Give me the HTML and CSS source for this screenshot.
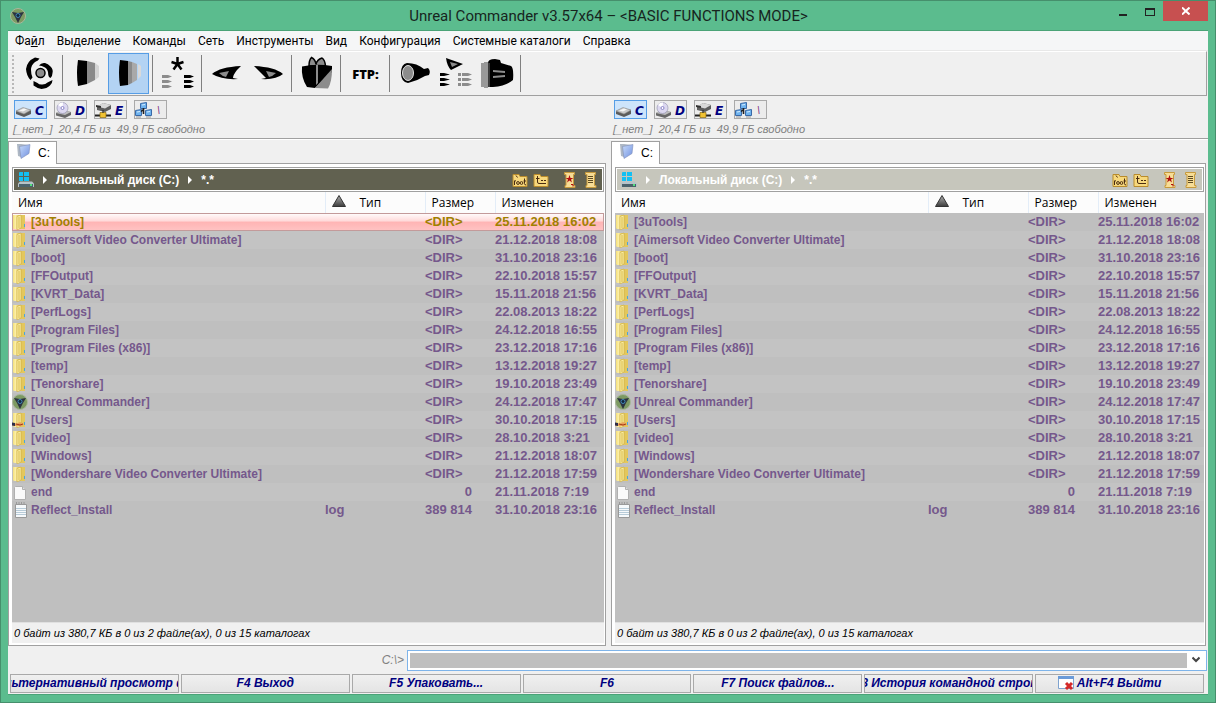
FILE: index.html
```html
<!DOCTYPE html>
<html lang="ru">
<head>
    <meta charset="UTF-8">
    <meta name="viewport" content="width=device-width, initial-scale=1.0">
    <title>Unreal Commander v3.57x64</title>
    <link rel="stylesheet" href="styles.css">
    <script src="script.js" defer></script>
</head>
<body>
    <!-- shared icons -->
    <svg class="sprite" width="0" height="0">
        <defs>
            <linearGradient id="gold" x1="0" x2="1"><stop offset="0" stop-color="#f3de78"/><stop offset=".4" stop-color="#fdf0a6"/><stop offset="1" stop-color="#dfc257"/></linearGradient>
            <linearGradient id="blue" x1="0" x2="1" y2="1"><stop offset="0" stop-color="#c8dcfa"/><stop offset="1" stop-color="#6f8fe0"/></linearGradient>
            <linearGradient id="steel" x2="0" y2="1"><stop offset="0" stop-color="#b0b0b0"/><stop offset="1" stop-color="#3c3c3c"/></linearGradient>
        </defs>
        <symbol id="i-app" viewBox="0 0 16 16">
            <circle cx="8" cy="8" r="7.500" fill="#7d9a62" stroke="#a9b79c"/>
            <path d="M2 4l6 1 6-1-3 5-3 6-3-6z" fill="#2c3340"/>
            <circle cx="8" cy="7.500" r="2" fill="#12263c" stroke="#3f86b5"/>
        </symbol>
        <symbol id="i-folder" viewBox="0 0 16 16">
            <path d="M6 1h7v14H6z" fill="#e3c75c"/>
            <path d="M1 1h6v14H2l-1-1z" fill="url(#gold)"/>
            <path d="M5 2.500l4-1.500v13l-4 2z" fill="#fbeea0" stroke="#c9a93c" stroke-width=".6"/>
            <path d="M7 3v11" stroke="#d8b94a"/>
            <path d="M12 10h1v3h-1z" fill="#4ba6d8"/>
        </symbol>
        <symbol id="i-users" viewBox="0 0 16 16">
            <use href="#i-folder"/>
            <path d="M0 11l5 .5 3-1.500 4 2-2 2-5 0-5-.5z" fill="#e9a15c"/>
            <path d="M0 10.500l3 .5v3l-3-.5z" fill="#2d2d48"/>
            <path d="M4 12l4 1 3-1" stroke="#a53a14" fill="none"/>
        </symbol>
        <symbol id="i-file" viewBox="0 0 16 16">
            <path d="M3.500 2.500h7l3 3v10h-11v-12z" fill="#fafafa" stroke="#b0b0b0"/>
            <path d="M10.500 2.500v3h3" fill="#ddd" stroke="#b0b0b0"/>
        </symbol>
        <symbol id="i-log" viewBox="0 0 16 16">
            <path d="M3.500 2.500h11v13h-11z" fill="#f6f9fb" stroke="#999"/>
            <path d="M4 6.500h10M4 8.500h10M4 10.500h10M4 12.500h10" stroke="#b7cbd8"/>
            <path d="M4.500 0v3M7 0v3M9.500 0v3M12 0v3" stroke="#9a9a9a"/>
        </symbol>
        <symbol id="i-tab" viewBox="0 0 16 16">
            <path d="M1 1l4 0 8 1-8 12-3-1z" fill="#aeb8c4"/>
            <path d="M3.500 3.500L14 1.500l-1 9-8 5z" fill="url(#blue)" stroke="#7f8fb8" stroke-width=".6"/>
        </symbol>
        <symbol id="i-hdd" viewBox="0 0 17 16">
            <path d="M1 9l7-3 8 2v4l-7 3-8-3z" fill="#5c5c5c"/>
            <path d="M1 9l7-3.500 8 2.500-7 4z" fill="#c9c9c9" stroke="#8d8d8d" stroke-width=".6"/>
            <path d="M4 8.500l5-2 3 1-4 2z" fill="#f6f6f6"/>
        </symbol>
        <symbol id="i-cd" viewBox="0 0 17 16">
            <path d="M1 11l5-3 10 2v3l-6 3-9-2.500z" fill="#686868"/>
            <path d="M1 11l5-3 10 2-6 3z" fill="#bdbdbd"/>
            <circle cx="7.500" cy="6" r="5.500" fill="#dcd8f0" stroke="#9a98b5" stroke-width=".7"/>
            <path d="M7.500 6L3 3a5.500 5.500 0 0 1 5-2.400z" fill="#fff"/>
            <circle cx="7.500" cy="6" r="1.500" fill="#fff" stroke="#8a84c8"/>
        </symbol>
        <symbol id="i-net" viewBox="0 0 17 16">
            <path d="M2 5l6-4 8 2v4l-6 3-8-2z" fill="#5e5e5e"/>
            <path d="M2 4.500L8 1l8 2-6 3.500z" fill="#d8d8d8"/>
            <path d="M1 3l5 1v2L1 5z" fill="#333"/>
            <path d="M0 13.500h16" stroke="#222" stroke-width="2"/>
            <path d="M5 10.500h6v5H5z" fill="#f1c232" stroke="#8a6a10" stroke-width=".7"/>
            <path d="M8 8v3" stroke="#222"/>
        </symbol>
        <symbol id="i-lan" viewBox="0 0 17 16">
            <path d="M5.500 1.500l6-1v6l-6 0zM.5 8.500l6-1v6l-6 0zM10.500 8.500l6-1v6l-6 0z" fill="#6fb3ee" stroke="#3a6aa8"/>
            <path d="M7 3l3-.5M2 10l3-.5M12 10l3-.5" stroke="#d5ecff"/>
            <path d="M8.500 6v6M6 9.500l2.500-2" stroke="#222" stroke-width="1.600"/>
            <path d="M1 15h5M11 15h5" stroke="#999"/>
        </symbol>
        <symbol id="i-disk" viewBox="0 0 16 16">
            <path d="M2 0h3v4H1V.5zM6 0h5v4H6zM1 5h4v4H1zM6 5h5v4H6z" fill="#12c0f4"/>
            <path d="M0 11.500l2-2h12l2 2v3.500H0z" fill="#b6c2c8"/>
            <path d="M1 12h14v3H1z" fill="#4c626b"/>
            <path d="M12 12h2v2h-2z" fill="#4fe07c"/>
        </symbol>
        <symbol id="i-root" viewBox="0 0 16 14">
            <path d="M1 1.500h6l1 2h7v10H1z" fill="#f7d87c" stroke="#b98c2c"/>
            <path d="M4 2.500l1.500 2M2.500 12V7.500M2.500 8.500l1.500-1M12.500 5.500v5q0 1.500 1.500 1.500M11.500 8h2.500" stroke="#4a2c10" fill="none"/>
            <circle cx="6" cy="10" r="1.400" fill="none" stroke="#4a2c10"/>
            <circle cx="9.500" cy="10" r="1.400" fill="none" stroke="#4a2c10"/>
        </symbol>
        <symbol id="i-up" viewBox="0 0 16 14">
            <path d="M1 1.500h6l1 2h7v10H1z" fill="#f7d87c" stroke="#b98c2c"/>
            <path d="M4.500 3v6q0 1.500 1.500 1.500h7M3 5.500h3.500M8 7.500h2M11 7.500h2" stroke="#4a2c10" fill="none"/>
        </symbol>
        <symbol id="i-fav" viewBox="0 0 12 16">
            <path d="M.5.500h10v2h-1v11h1.500v2H1v-2h1v-11H.5z" fill="#f7dd96" stroke="#c79a3c"/>
            <path d="M5.500 3l1 3h3L7 7.500l1 3-2.500-2-2.500 2 1-3L1.500 6h3z" fill="#b00f0f"/>
            <path d="M7 12.500h2v2" stroke="#b00f0f" fill="none"/>
        </symbol>
        <symbol id="i-hist" viewBox="0 0 12 16">
            <path d="M.5.500h10v2h-1v11h1.500v2H1v-2h1v-11H.5z" fill="#f7dd96" stroke="#c79a3c"/>
            <path d="M3 4.500h5M3 6.500h5M3 8.500h5M3 10.500h5" stroke="#5d4a20"/>
        </symbol>
    </svg>

    <div class="window">
        <header class="titlebar">
            <svg class="app-icon"><use href="#i-app"/></svg>
            <h1>Unreal Commander v3.57x64 – &lt;BASIC FUNCTIONS MODE&gt;</h1>
            <div class="win-buttons">
                <button type="button" class="win-btn" aria-label="Свернуть"><svg width="10" height="10"><path d="M1 7h8v2H1z"/></svg></button>
                <button type="button" class="win-btn" aria-label="Развернуть"><svg width="10" height="10"><path d="M0 1h10v8H0zM1 3v5h8V3z" fill-rule="evenodd"/></svg></button>
                <button type="button" class="win-btn close" aria-label="Закрыть"><svg width="8" height="8"><path d="M0 .5l7.500 7M7.500.500L0 7.500" stroke="#fff" stroke-width="2"/></svg></button>
            </div>
        </header>

        <div class="client">
            <nav class="menu">
                <a href="#">Фа<u>й</u>л</a>
                <a href="#">Выделение</a>
                <a href="#">Команды</a>
                <a href="#">Сеть</a>
                <a href="#">Инструменты</a>
                <a href="#">Вид</a>
                <a href="#">Конфигурация</a>
                <a href="#">Системные каталоги</a>
                <a href="#">Справка</a>
            </nav>

            <div class="toolbar">
                <span class="grip"></span>
                <button type="button" aria-label="Обновить"><svg viewBox="0 0 41 41">
                    <circle cx="22.500" cy="20" r="4.500" fill="#8c8c8c" stroke="#000" stroke-width="1.500"/>
                    <path d="M17 4.500l4.500 1q-1 2-4.500 3.500-4 3-4 8 0 4 1.500 7.500l-2 2.500q-4-4-4.500-11 1-8 9-11.500z"/>
                    <path d="M21 12.500q2-3 6-2.500 3 .5 5.500 3.500 3 3 2 6.500 0 3-2 5l-1.500-1q-1-2-1-5-1-4-4-5-2-1.500-5-1.500z"/>
                    <path d="M15.500 28l4 2q2 2 5 1.500 3 0 5-2l5-2.500q0 3-2.500 5.500-3 3-8.500 3.500-4-.5-8-3.500z"/>
                </svg></button>
                <span class="sep"></span>
                <button type="button" aria-label="Краткий вид"><svg viewBox="0 0 41 41">
                    <path d="M11 7q-2 13 0 26l9-2V8z"/>
                    <path d="M20 8v23l8-4V10z" fill="#8a8a8a"/>
                    <path d="M28 10v17l4-3V13z" fill="#d4d4d4"/>
                </svg></button>
                <button type="button" class="active" aria-label="Подробный вид"><svg viewBox="0 0 41 41">
                    <path d="M12 7q-2 13 0 26l8-1V8z"/>
                    <path d="M20 8v24l4-2V9z" fill="#8a8a8a"/>
                    <path d="M24 9v21l5-3V11z" fill="#a9a9a9"/>
                    <path d="M30 11v15l3-3V13z" fill="#d9d9d9"/>
                </svg></button>
                <span class="sep"></span>
                <button type="button" aria-label="Все файлы"><svg viewBox="0 0 41 41">
                    <path d="M20.500 4v7M14.500 9l6 2M26.500 9l-6 2M16.500 16.500l4-5.500M24.500 16.500l-4-5.500" stroke="#000" stroke-width="2.500" fill="none"/>
                    <path d="M5 22h6l4 1.500-4 1.500H5zM5 27h6l4 1.500-4 1.500H5zM5 32h6l4 1.500-4 1.500H5z" fill="#8c8c8c"/>
                    <path d="M27 22h6l4 1.500-4 1.500h-6zM27 32h6l4 1.500-4 1.500h-6z"/>
                    <path d="M27 27h6l4 1.500-4 1.500h-6z"/>
                </svg></button>
                <span class="sep"></span>
                <button type="button" aria-label="Назад"><svg viewBox="0 0 41 41">
                    <path d="M6 21q8-7 29-8l-4 4q-4 5-4 8l5 1q-16 1-26-5z"/>
                    <path d="M13 20l10-2-3 6q-4-1-7-4z" fill="#8c8c8c"/>
                </svg></button>
                <button type="button" aria-label="Вперёд"><svg viewBox="0 0 41 41">
                    <path d="M36 21Q28 14 7 13l4 4 8 8-5 1q15 1 22-5z"/>
                    <path d="M19 18l10 2q-3 3-7 4z" fill="#8c8c8c"/>
                </svg></button>
                <span class="sep"></span>
                <button type="button" aria-label="Архив"><svg viewBox="0 0 41 41">
                    <path d="M13 13q0-6 2.500-8.500 4 2 4.500 7 1-5 6-6.500 3 2 3.500 8z" fill="#8c8c8c" stroke="#000" stroke-width="1.500"/>
                    <path d="M6 13.500q14-3 30-.5v6L19 35l-8-1Q5 25 6 13.500z"/>
                    <path d="M36 16q0 13-4 19.500l-13-.5z" fill="#8c8c8c"/>
                    <path d="M20 12h2l0 18-2 2z" fill="#8c8c8c"/>
                </svg></button>
                <span class="sep"></span>
                <button type="button" class="ftp">FTP:</button>
                <span class="sep"></span>
                <button type="button" aria-label="Поиск"><svg viewBox="0 0 41 41">
                    <path d="M13 10q10 0 17 6l4-1q3 3 1 7l-4 1q-8 5-17 7-7-1-7-10t6-10z"/>
                    <ellipse cx="14" cy="20" rx="5.500" ry="7.500" fill="#8c8c8c" stroke="#e0e0e0"/>
                </svg></button>
                <button type="button" aria-label="Сравнить"><svg viewBox="0 0 41 41">
                    <path d="M11 5l17 6-12 6q-4-4-5-12z"/>
                    <path d="M15 9l8 2-6 3z" fill="#8c8c8c"/>
                    <path d="M5 20h4l6 1.500-6 1.500H5zM5 25h4l6 1.500-6 1.500H5zM5 30h4l6 1.500-6 1.500H5z"/>
                    <path d="M23 20h3v3h-3zM27 20h6l4 1.500-4 1.500h-6zM23 25h3v3h-3zM27 25h6l4 1.500-4 1.500h-6zM23 30h3v3h-3zM27 30h6l4 1.500-4 1.500h-6z" fill="#8c8c8c"/>
                </svg></button>
                <button type="button" aria-label="Каталоги"><svg viewBox="0 0 41 41">
                    <path d="M5 10h3v24H5zM8 9h4v26H8z" fill="#999"/>
                    <path d="M12 10q0-4 7-4l5 1 1 3 10 3q3 2 2 14-7 6-20 7h-5z"/>
                    <path d="M13 10v24" stroke="#777"/>
                    <path d="M17 17l12 1v2l-12-1zM17 25l12-1v-2l-12 1z" fill="#8c8c8c"/>
                </svg></button>
                <span class="sep"></span>
            </div>

            <div class="drives">
                <section class="drive-bar">
                    <div class="drive-list">
                        <button type="button" class="active"><svg><use href="#i-hdd"/></svg><b>C</b></button>
                        <button type="button"><svg><use href="#i-cd"/></svg><b>D</b></button>
                        <button type="button"><svg><use href="#i-net"/></svg><b>E</b></button>
                        <button type="button"><svg><use href="#i-lan"/></svg><i>\</i></button>
                    </div>
                    <p>[_нет_]&nbsp; 20,4 ГБ из&nbsp; 49,9 ГБ свободно</p>
                </section>
                <section class="drive-bar">
                    <div class="drive-list">
                        <button type="button" class="active"><svg><use href="#i-hdd"/></svg><b>C</b></button>
                        <button type="button"><svg><use href="#i-cd"/></svg><b>D</b></button>
                        <button type="button"><svg><use href="#i-net"/></svg><b>E</b></button>
                        <button type="button"><svg><use href="#i-lan"/></svg><i>\</i></button>
                    </div>
                    <p>[_нет_]&nbsp; 20,4 ГБ из&nbsp; 49,9 ГБ свободно</p>
                </section>
            </div>

            <main class="panels">
                <section class="panel">
                    <button type="button" class="tab"><svg><use href="#i-tab"/></svg>C:</button>
                    <div class="panel-body">
                        <div class="path current">
                            <div class="path-inner">
                                <svg class="disk"><use href="#i-disk"/></svg>
                                <span class="arrow"></span><span>Локальный диск (C:)</span>
                                <span class="arrow"></span><span>*.*</span>
                                <div class="path-tools">
                                    <button type="button" aria-label="Корень"><svg width="16" height="14"><use href="#i-root"/></svg></button>
                                    <button type="button" aria-label="Вверх"><svg width="16" height="14"><use href="#i-up"/></svg></button>
                                    <button type="button" class="fav" aria-label="Избранное"><svg width="12" height="16"><use href="#i-fav"/></svg></button>
                                    <button type="button" class="hist" aria-label="История"><svg width="12" height="16"><use href="#i-hist"/></svg></button>
                                </div>
                            </div>
                        </div>
                        <div class="list">
                            <table class="files" data-selected="0">
                                <thead>
                                    <tr><th class="c-name">Имя</th><th class="c-type"><svg width="14" height="12"><path d="M7 .5L13.500 11.500H.5z" fill="url(#steel)" stroke="#333"/></svg>Тип</th><th class="c-size">Размер</th><th>Изменен</th></tr>
                                </thead>
                                <tbody></tbody>
                            </table>
                        </div>
                        <p class="status">0 байт из 380,7 КБ в 0 из 2 файле(ах), 0 из 15 каталогах</p>
                    </div>
                </section>

                <section class="panel">
                    <button type="button" class="tab"><svg><use href="#i-tab"/></svg>C:</button>
                    <div class="panel-body">
                        <div class="path">
                            <div class="path-inner">
                                <svg class="disk"><use href="#i-disk"/></svg>
                                <span class="arrow"></span><span>Локальный диск (C:)</span>
                                <span class="arrow"></span><span>*.*</span>
                                <div class="path-tools">
                                    <button type="button" aria-label="Корень"><svg width="16" height="14"><use href="#i-root"/></svg></button>
                                    <button type="button" aria-label="Вверх"><svg width="16" height="14"><use href="#i-up"/></svg></button>
                                    <button type="button" class="fav" aria-label="Избранное"><svg width="12" height="16"><use href="#i-fav"/></svg></button>
                                    <button type="button" class="hist" aria-label="История"><svg width="12" height="16"><use href="#i-hist"/></svg></button>
                                </div>
                            </div>
                        </div>
                        <div class="list">
                            <table class="files">
                                <thead>
                                    <tr><th class="c-name">Имя</th><th class="c-type"><svg width="14" height="12"><path d="M7 .5L13.500 11.500H.5z" fill="url(#steel)" stroke="#333"/></svg>Тип</th><th class="c-size">Размер</th><th>Изменен</th></tr>
                                </thead>
                                <tbody></tbody>
                            </table>
                        </div>
                        <p class="status">0 байт из 380,7 КБ в 0 из 2 файле(ах), 0 из 15 каталогах</p>
                    </div>
                </section>
            </main>

            <div class="command">
                <label for="cmd">C:\&gt;</label>
                <div class="combo">
                    <input type="text" id="cmd">
                    <button type="button" aria-label="История команд"><svg width="8" height="8"><path d="M.5 1.500L4 5l3.500-3.500" fill="none" stroke="#444" stroke-width="2"/></svg></button>
                </div>
            </div>

            <div class="fkeys">
                <button type="button"><span>Альтернативный просмотр фа</span></button>
                <button type="button"><span>F4 Выход</span></button>
                <button type="button"><span>F5 Упаковать...</span></button>
                <button type="button"><span>F6</span></button>
                <button type="button"><span>F7 Поиск файлов...</span></button>
                <button type="button"><span>F8 История командной строки</span></button>
                <button type="button" class="exit"><svg width="16" height="15" viewBox="0 0 16 15"><path d="M.5.500h15v12H.5z" fill="#fff" stroke="#7fa3cf"/><path d="M0 0h16v3H0z" fill="#6a9bd8"/><path d="M8 7l6 6M14 7l-6 6" stroke="#d42a2a" stroke-width="3"/></svg><span>Alt+F4 Выйти</span></button>
            </div>
        </div>
    </div>
</body>
</html>
```

FILE: styles.css
```css
* {
    box-sizing: border-box;
}
body {
    margin: 0;
    font-family: "Liberation Sans", Arial, sans-serif;
    font-size: 13px;
    color: #000;
}
h1, p {
    margin: 0;
    font-weight: normal;
}
button {
    font: inherit;
    padding: 0;
    border: 0;
    background: none;
}
svg {
    display: block;
    flex: none;
}
.sprite {
    position: absolute;
}

/* window frame */
.window {
    display: flex;
    flex-direction: column;
    min-height: 100vh;
    padding: 0 7px 7px;
    border: 1px solid #468f6c;
    background: #5bbc8e;
}
.titlebar {
    display: flex;
    align-items: center;
    height: 29px;
}
.titlebar h1 {
    flex: 1;
    text-align: center;
    font: 15px Roboto, "Noto Sans", sans-serif;
    color: #17251e;
}
.app-icon {
    width: 16px;
    height: 16px;
    margin: 0 82px 0 2px;
}
.win-buttons {
    display: flex;
    align-self: flex-start;
}
.win-btn {
    display: flex;
    justify-content: center;
    width: 27px;
    height: 20px;
    padding-top: 6px;
    fill: #222;
}
.close {
    width: 45px;
    background: #c75050;
}
.client {
    flex: 1;
    display: flex;
    flex-direction: column;
    border-top: 1px solid #4aa377;
    border-bottom: 1px solid #4aa377;
    background: #f0f0f0;
}

/* menu */
.menu {
    display: flex;
    gap: 12px;
    height: 20px;
    padding-left: 7px;
    background: #f5f6f7;
    border-bottom: 1px solid #e8e8e8;
    font: 12px/20px Roboto, "Noto Sans", sans-serif;
}
.menu a {
    color: #000;
    text-decoration: none;
}

/* toolbar */
.toolbar {
    display: flex;
    align-items: center;
    height: 45px;
    margin-right: 1px;
    padding-left: 4px;
    border-top: 1px solid #fff;
    border-right: 1px solid #a0a0a0;
    border-bottom: 1px solid #a0a0a0;
}
.toolbar button {
    width: 41px;
    height: 41px;
}
.toolbar .active {
    background: #b3d3f3;
    box-shadow: inset 0 0 0 1px #569de5;
}
.grip {
    height: 38px;
    margin-right: 4px;
    border-left: 2px dotted #b8b8b8;
}
.sep {
    width: 1px;
    height: 37px;
    margin: 0 4px 0 3px;
    background: #808080;
}
.toolbar .ftp {
    font: 800 13px "Open Sans", "Noto Sans", sans-serif;
}

/* drives */
.drives {
    display: grid;
    grid-template-columns: 1fr 1fr;
    height: 43px;
    border-bottom: 1px solid #a0a0a0;
}
.drive-bar {
    padding: 4px 5px 0;
}
.drive-list {
    display: flex;
    gap: 7px;
    padding-left: 1px;
}
.drive-list button {
    display: flex;
    align-items: center;
    gap: 3px;
    width: 33px;
    height: 19px;
    border: 1px solid #a9a9a9;
    background: #ececec;
    color: #000080;
}
.drive-list .active {
    border-color: #569de5;
    background: #cde4fb;
}
.drive-list svg {
    width: 17px;
    height: 16px;
}
.drive-list b {
    padding-top: 4px;
    font: italic bold 12px/15px "DejaVu Sans", sans-serif;
}
.drive-list i {
    padding-left: 2px;
    color: #803080;
    font-size: 11px;
}
.drive-bar p {
    font-size: 11px;
    line-height: 20px;
    font-style: italic;
    color: #808080;
}

/* panels */
.panels {
    flex: 1;
    display: grid;
    grid-template-columns: 598fr 595fr;
    gap: 5px;
    padding: 1px 2px 0 0;
    border-top: 1px solid #fff;
}
.panel {
    display: flex;
    flex-direction: column;
}
.tab {
    display: flex;
    align-items: center;
    align-self: flex-start;
    gap: 6px;
    width: 49px;
    height: 23px;
    margin-bottom: -1px;
    padding-left: 7px;
    position: relative;
    border: 1px solid #a0a0a0;
    border-bottom: 0;
    background: #fff;
    font-size: 12px;
}
.tab svg {
    width: 16px;
    height: 16px;
    margin-bottom: 4px;
}
.panel-body {
    flex: 1;
    display: flex;
    flex-direction: column;
    padding: 3px 1px 2px 3px;
    border: 1px solid #a0a0a0;
    background: #fff;
}
.path {
    height: 25px;
    padding: 1px;
    border: 1px solid #a0a0a0;
}
.path-inner {
    display: flex;
    align-items: center;
    height: 100%;
    padding-left: 4px;
    background: #c6c6bc;
    color: #fff;
    font-weight: bold;
    font-size: 12px;
}
.current .path-inner {
    background: #616150;
}
.disk {
    width: 16px;
    height: 16px;
}
.arrow {
    margin: 0 9px;
    border: 4px solid transparent;
    border-left-color: #fff;
    border-right: 0;
}
.path-tools {
    display: flex;
    align-items: center;
    gap: 5px;
    margin-left: auto;
    padding-right: 5px;
}
.path-tools .fav {
    margin-left: 10px;
}
.path-tools .hist {
    margin-left: 4px;
}

/* file list */
.list {
    flex: 1;
    background: #bfbfbf;
}
.files {
    width: 100%;
    table-layout: fixed;
    border-collapse: collapse;
}
.files th {
    height: 21px;
    padding: 0 0 0 6px;
    border-right: 1px solid #e3edf8;
    background: #fcfcfc;
    font: 12px/21px "Open Sans", "Noto Sans", sans-serif;
    text-align: left;
}
.files th:last-child {
    border-right: 0;
}
.c-name {
    width: 313px;
}
.c-type {
    width: 100px;
}
.c-type svg {
    display: inline-block;
    margin-right: 14px;
}
.c-size {
    width: 70px;
}
.files td {
    height: 18px;
    padding: 0;
    color: #75588c;
    font-size: 13px;
    font-weight: bold;
    line-height: 18px;
    white-space: nowrap;
}
.files tbody tr:nth-child(even) {
    background: #c3c3c3;
}
.files .name {
    display: flex;
    align-items: center;
    gap: 3px;
    font-size: 12px;
}
.files .name svg {
    width: 16px;
    height: 16px;
}
.files .num {
    padding-right: 23px;
    text-align: right;
}
.files .selected {
    background: linear-gradient(#fff, #ffd9d9 45%, #ffb4b4 50%, #ffc4c4);
    box-shadow: inset 0 0 0 1px #c39a9a;
}
.files .selected td {
    color: #a08000;
}
.status {
    height: 21px;
    padding-left: 2px;
    border-top: 1px solid #e0e0e0;
    background: #f0f0f0;
    font-size: 11px;
    line-height: 20px;
    font-style: italic;
}

/* command line */
.command {
    display: flex;
    align-items: center;
    height: 27px;
    padding: 3px 1px 2px 0;
}
.command label {
    width: 399px;
    padding-right: 3px;
    text-align: right;
    font-size: 12px;
    font-style: italic;
    color: #808080;
}
.combo {
    flex: 1;
    display: flex;
    height: 21px;
    padding: 2px;
    border: 1px solid #7eb4ea;
    background: #fff;
}
.combo input {
    flex: 1;
    border: 0;
    background: #bfbfbf;
}
.combo button {
    display: flex;
    align-items: center;
    justify-content: center;
    width: 17px;
}

/* function keys */
.fkeys {
    display: grid;
    grid-template-columns: repeat(7, 1fr);
    gap: 2px;
    padding: 1px 4px 1px 2px;
}
.fkeys button {
    display: flex;
    align-items: center;
    justify-content: center;
    gap: 3px;
    min-width: 0;
    height: 19px;
    overflow: hidden;
    border: 1px solid #a9a9a9;
    background: linear-gradient(#f0f0f0, #e4e4e4);
    color: #000080;
    font-size: 12px;
    font-weight: bold;
    font-style: italic;
    line-height: 19px;
    white-space: nowrap;
}
.fkeys .exit {
    padding-right: 20px;
}
```

FILE: script.js
```js
const files = [
    ["folder", "[3uTools]", "", "<DIR>", "25.11.2018 16:02"],
    ["folder", "[Aimersoft Video Converter Ultimate]", "", "<DIR>", "21.12.2018 18:08"],
    ["folder", "[boot]", "", "<DIR>", "31.10.2018 23:16"],
    ["folder", "[FFOutput]", "", "<DIR>", "22.10.2018 15:57"],
    ["folder", "[KVRT_Data]", "", "<DIR>", "15.11.2018 21:56"],
    ["folder", "[PerfLogs]", "", "<DIR>", "22.08.2013 18:22"],
    ["folder", "[Program Files]", "", "<DIR>", "24.12.2018 16:55"],
    ["folder", "[Program Files (x86)]", "", "<DIR>", "23.12.2018 17:16"],
    ["folder", "[temp]", "", "<DIR>", "13.12.2018 19:27"],
    ["folder", "[Tenorshare]", "", "<DIR>", "19.10.2018 23:49"],
    ["app", "[Unreal Commander]", "", "<DIR>", "24.12.2018 17:47"],
    ["users", "[Users]", "", "<DIR>", "30.10.2018 17:15"],
    ["folder", "[video]", "", "<DIR>", "28.10.2018 3:21"],
    ["folder", "[Windows]", "", "<DIR>", "21.12.2018 18:07"],
    ["folder", "[Wondershare Video Converter Ultimate]", "", "<DIR>", "21.12.2018 17:59"],
    ["file", "end", "", "0", "21.11.2018 7:19"],
    ["log", "Reflect_Install", "log", "389 814", "31.10.2018 23:16"]
];

document.querySelectorAll(".files").forEach(function(table) {
    const body = table.querySelector("tbody");
    files.forEach(function(file, index) {
        const [icon, name, type, size, date] = file;
        const row = body.insertRow();
        if (table.dataset.selected === String(index)) {
            row.className = "selected";
        }
        row.innerHTML = `<td><div class="name"><svg><use href="#i-${icon}"/></svg><span></span></div></td><td></td><td></td><td></td>`;
        row.querySelector("span").textContent = name;
        row.cells[1].textContent = type;
        row.cells[2].textContent = size;
        row.cells[3].textContent = date;
        if (size !== "<DIR>") {
            row.cells[2].className = "num";
        }
    });
});
```
